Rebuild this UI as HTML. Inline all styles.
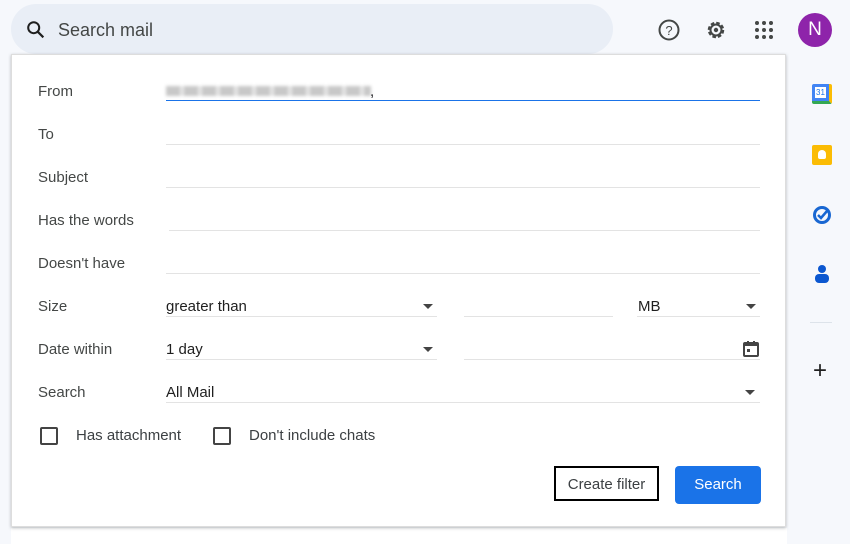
<!DOCTYPE html>
<html><head><style>
body{margin:0;width:850px;height:544px;background:#f6f8fc;font-family:"Liberation Sans",Arial,sans-serif;position:relative;overflow:hidden;color:#202124}
.abs{position:absolute}
.sb{left:11px;top:4px;width:602px;height:50px;border-radius:25px;background:#e9eef6}
.panel{left:11px;top:54px;width:775px;height:473px;background:#fff;box-shadow:0 1px 3px rgba(60,64,67,.35);border:1px solid #ddd;box-sizing:border-box}
.lbl{font-size:15px;color:#444746;left:38px}
.ln{height:1px;background:#e3e3e3}
.val{font-size:15px;color:#1f1f1f}
.arr{width:0;height:0;border-left:5px solid transparent;border-right:5px solid transparent;border-top:5px solid #444}
.cb{width:14px;height:14px;border:2px solid #444;border-radius:2px}
</style></head><body>
<div class="abs" style="left:11px;top:528px;width:776px;height:16px;background:#fff"></div>
<div class="abs sb"></div>
<svg class="abs" style="left:25px;top:19px" width="22" height="22" viewBox="0 0 24 24"><circle cx="9.5" cy="9.5" r="6" fill="none" stroke="#1f1f1f" stroke-width="2.2"/><path d="M14 14l6 6" stroke="#1f1f1f" stroke-width="2.4"/></svg>
<div class="abs" style="left:58px;top:20px;font-size:18px;color:#444746">Search mail</div>
<svg class="abs" style="left:657px;top:18px" width="24" height="24" viewBox="0 0 24 24"><circle cx="12" cy="12" r="9.5" fill="none" stroke="#444746" stroke-width="2"/><text x="12" y="17" font-size="13" text-anchor="middle" fill="#444746" font-family="Liberation Sans">?</text></svg>
<svg class="abs" style="left:704px;top:18px" width="24" height="24" viewBox="0 0 24 24"><circle cx="12" cy="12" r="7" fill="none" stroke="#444746" stroke-width="2.5" stroke-dasharray="3.5 2"/><circle cx="12" cy="12" r="5.5" fill="none" stroke="#444746" stroke-width="2"/><circle cx="12" cy="12" r="2.2" fill="#444746"/></svg>
<svg class="abs" style="left:754px;top:20px" width="20" height="20" viewBox="0 0 20 20" fill="#444746"><circle cx="3" cy="3" r="2"/><circle cx="10" cy="3" r="2"/><circle cx="17" cy="3" r="2"/><circle cx="3" cy="10" r="2"/><circle cx="10" cy="10" r="2"/><circle cx="17" cy="10" r="2"/><circle cx="3" cy="17" r="2"/><circle cx="10" cy="17" r="2"/><circle cx="17" cy="17" r="2"/></svg>
<div class="abs" style="left:798px;top:13px;width:34px;height:34px;border-radius:50%;background:#8e24aa;color:#fff;font-size:19px;text-align:center;line-height:34px">N</div>
<div class="abs" style="left:812px;top:84px;width:20px;height:20px;border-radius:2px;background:#4285f4;border-bottom:3px solid #34a853;border-right:3px solid #fbbc04;box-sizing:border-box"><div style="margin:3px;background:#fff;height:11px;font-size:8px;color:#1a73e8;text-align:center;line-height:11px">31</div></div>
<div class="abs" style="left:812px;top:145px;width:20px;height:20px;border-radius:2px;background:#fbbc04"><div style="margin:5px 6px;width:8px;height:9px;border-radius:4px 4px 2px 2px;background:#fff"></div></div>
<svg class="abs" style="left:812px;top:205px" width="20" height="20" viewBox="0 0 20 20"><circle cx="10" cy="10" r="7.5" fill="none" stroke="#1967d2" stroke-width="3"/><path d="M6 10l3 3 6-7" fill="none" stroke="#1967d2" stroke-width="2.5"/></svg>
<svg class="abs" style="left:812px;top:264px" width="20" height="20" viewBox="0 0 20 20" fill="#0b57d0"><circle cx="10" cy="5" r="4"/><rect x="3" y="10" width="14" height="9" rx="4"/></svg>
<div class="abs" style="left:810px;top:322px;width:22px;height:1px;background:#dde3ea"></div>
<div class="abs" style="left:813px;top:361px;font-size:24px;color:#1f1f1f;line-height:20px">+</div>
<div class="abs panel"></div>
<div class="abs lbl" style="top:83px">From</div>
<div class="abs" style="left:166px;top:86px;width:205px;height:10px;background:repeating-linear-gradient(90deg,#c8c8c8 0 14px,#e6e6e6 14px 18px);filter:blur(1.5px)"></div>
<div class="abs" style="left:370px;top:83px;font-size:15px">,</div>
<div class="abs" style="left:166px;top:100px;width:594px;height:1px;background:#1a73e8"></div>
<div class="abs lbl" style="top:126px">To</div><div class="abs ln" style="left:166px;top:144px;width:594px"></div>
<div class="abs lbl" style="top:169px">Subject</div><div class="abs ln" style="left:166px;top:187px;width:594px"></div>
<div class="abs lbl" style="top:212px">Has the words</div><div class="abs ln" style="left:169px;top:230px;width:591px"></div>
<div class="abs lbl" style="top:255px">Doesn't have</div><div class="abs ln" style="left:166px;top:273px;width:594px"></div>
<div class="abs lbl" style="top:298px">Size</div>
<div class="abs val" style="left:166px;top:298px">greater than</div><div class="abs arr" style="left:423px;top:304px"></div><div class="abs ln" style="left:166px;top:316px;width:271px"></div>
<div class="abs ln" style="left:464px;top:316px;width:149px"></div>
<div class="abs val" style="left:638px;top:298px">MB</div><div class="abs arr" style="left:746px;top:304px"></div><div class="abs ln" style="left:637px;top:316px;width:123px"></div>
<div class="abs lbl" style="top:341px">Date within</div>
<div class="abs val" style="left:166px;top:341px">1 day</div><div class="abs arr" style="left:423px;top:347px"></div><div class="abs ln" style="left:166px;top:359px;width:271px"></div>
<div class="abs ln" style="left:464px;top:359px;width:296px"></div>
<svg class="abs" style="left:742px;top:340px" width="18" height="18" viewBox="0 0 18 18"><rect x="2" y="3" width="14" height="13" rx="1" fill="none" stroke="#444" stroke-width="2"/><rect x="2" y="3" width="14" height="3" fill="#444"/><rect x="5" y="1" width="2" height="3" fill="#444"/><rect x="11" y="1" width="2" height="3" fill="#444"/><rect x="5" y="9" width="3" height="3" fill="#444"/></svg>
<div class="abs lbl" style="top:384px">Search</div>
<div class="abs val" style="left:166px;top:384px">All Mail</div><div class="abs arr" style="left:745px;top:390px"></div><div class="abs ln" style="left:166px;top:402px;width:594px"></div>
<div class="abs cb" style="left:40px;top:427px"></div><div class="abs val" style="left:76px;top:427px;color:#3c4043">Has attachment</div>
<div class="abs cb" style="left:213px;top:427px"></div><div class="abs val" style="left:249px;top:427px;color:#3c4043">Don't include chats</div>
<div class="abs" style="left:554px;top:466px;width:105px;height:35px;border:2px solid #000;box-sizing:border-box;font-size:15px;text-align:center;line-height:33px;color:#3c4043">Create filter</div>
<div class="abs" style="left:675px;top:466px;width:86px;height:38px;border-radius:4px;background:#1a73e8;color:#fff;font-size:15px;text-align:center;line-height:38px">Search</div>
</body></html>
